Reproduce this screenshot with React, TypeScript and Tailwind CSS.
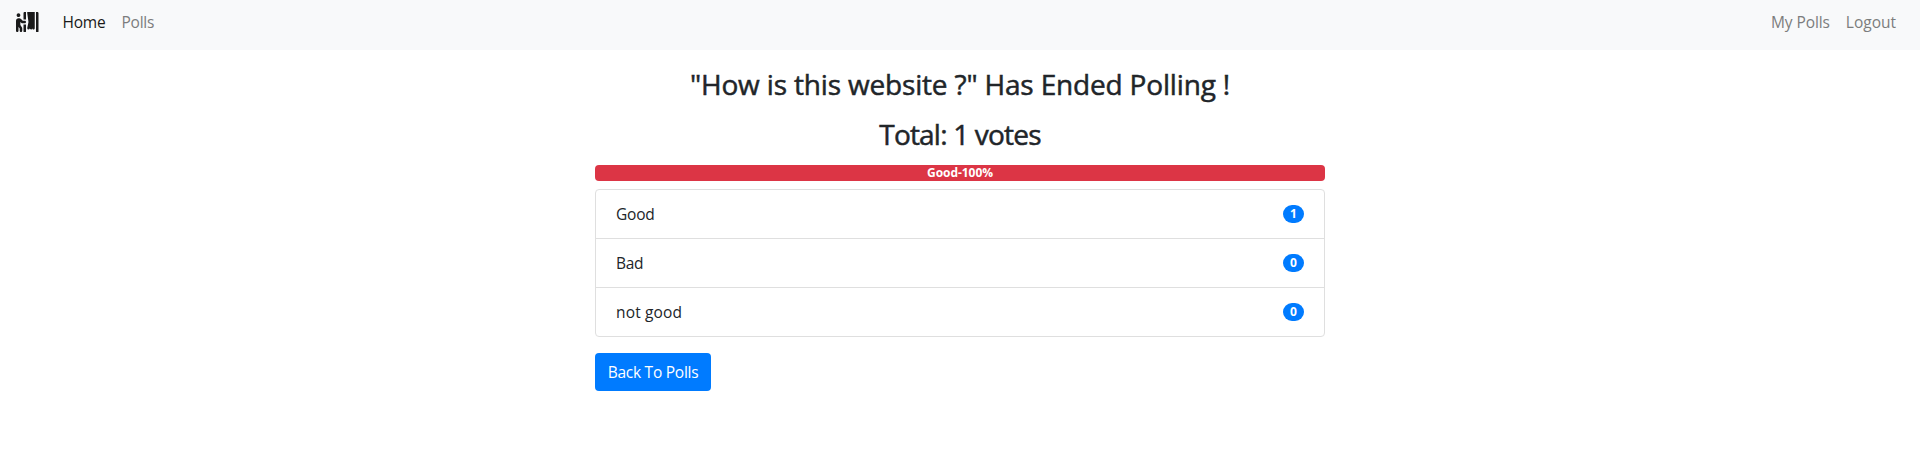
import { FaPersonBooth } from "react-icons/fa";

const choices = [
  { label: "Good", votes: 1, tracking: "tracking-[-0.2px]" },
  { label: "Bad", votes: 0, tracking: "tracking-[-0.35px]" },
  { label: "not good", votes: 0, tracking: "tracking-[0.15px]" },
];

export default function App() {
  return (
    <div className="min-h-[460px] bg-white font-['Open_Sans','Noto_Sans',sans-serif] text-base text-[#212529]">
      <nav className="flex h-[50px] justify-between bg-[#f8f9fa] px-4 pt-[10px] text-[15.5px] leading-6">
        <div className="flex">
          <a href="#" className="mr-6 flex h-6 items-center text-[20px] text-[#1a1a1a]">
            <FaPersonBooth className="h-5 w-[22.5px]" />
          </a>
          <a href="#" className="mr-4 whitespace-nowrap tracking-[-0.2px] text-[#191919]">Home</a>
          <a href="#" className="whitespace-nowrap tracking-[-0.25px] text-[#7c7d7d]">Polls</a>
        </div>
        <div className="flex gap-4 pr-2 text-[#7c7d7d]">
          <a href="#" className="whitespace-nowrap tracking-[-0.1px]">My Polls</a>
          <a href="#" className="whitespace-nowrap">Logout</a>
        </div>
      </nav>
      <main className="mx-auto w-[730px] pt-[17px]">
        <h3 className="text-center text-[28px] leading-[34px] font-medium tracking-[-0.17px] [-webkit-text-stroke:0.5px_#212529]">
          "How is this website ?" Has Ended Polling !
        </h3>
        <h3 className="mt-4 text-center text-[28px] leading-[34px] font-medium tracking-[-0.8px] [-webkit-text-stroke:0.5px_#212529]">
          Total: 1 votes
        </h3>
        <div className="mt-[14px] flex h-4 items-center justify-center rounded bg-[#dc3545] text-[12px] leading-4 font-bold tracking-[-0.05px] text-white">
          Good-100%
        </div>
        <ul className="mt-2 divide-y divide-[#dfdfdf] rounded border border-[#dfdfdf]">
          {choices.map((c) => (
            <li key={c.label} className="flex h-[49px] items-center justify-between px-5 text-[15.5px] leading-6 last:h-12">
              <span className={c.tracking}>{c.label}</span>
              <span className="flex h-[18px] w-[21px] items-center justify-center rounded-full bg-[#007bff] text-[12px] leading-3 font-bold text-white">
                {c.votes}
              </span>
            </li>
          ))}
        </ul>
        <a href="#" className="mt-4 flex h-[38px] w-[116px] items-center justify-center rounded bg-[#007bff] text-[15.5px] leading-6 tracking-[-0.25px] whitespace-nowrap text-white">
          Back To Polls
        </a>
      </main>
    </div>
  );
}
